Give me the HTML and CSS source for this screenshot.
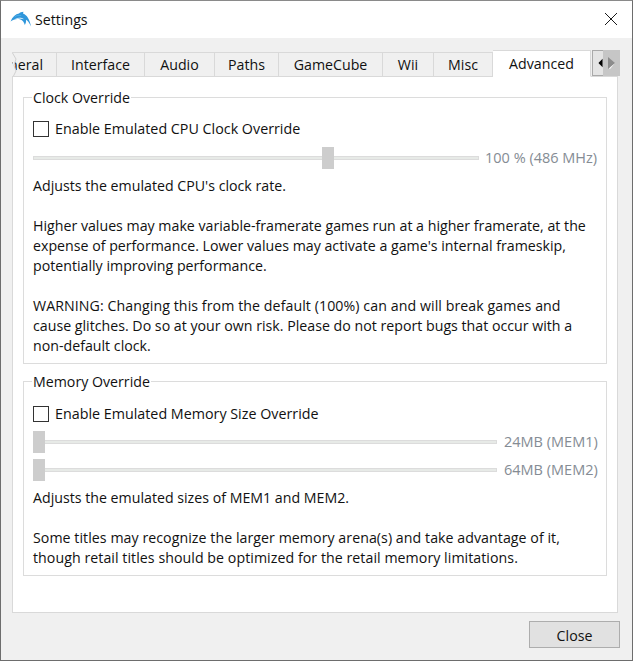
FILE: index.html
```html
<!DOCTYPE html>
<html lang="en">
<head>
<meta charset="utf-8">
<title>Settings</title>
<link rel="stylesheet" href="styles.css">
</head>
<body>
<div class="window">
  <header class="titlebar">
    <svg class="logo" width="22" height="17" viewBox="0 0 22 17">
      <path d="M0.500 10.500C2.500 6 5.500 3.200 9 2.600C10 1.400 11.500 0.800 13.500 0.700C13 1.500 13 2.200 13.300 2.800C16.800 4 19.500 8 21 15.500C19 11.500 17.500 9.500 16 8.800C16.300 10.500 15.800 12.500 14.800 14C14.300 11.500 12.500 9.300 10.500 8.500C7 7.400 3.500 8.200 0.500 10.500Z" fill="#2f96db"/>
      <path d="M2.500 7.500C5 5 8.500 3.800 11.500 4.200C8 4.200 5 5.300 2.500 7.500Z" fill="#7fd0f2"/>
      <path d="M5 8C8 6.300 11.500 6.300 14 8.200C11.500 7.200 8 7.200 5 8Z" fill="#ffffff"/>
    </svg>
    <span class="title">Settings</span>
    <svg class="close-x" width="14" height="14" viewBox="0 0 14 14"><path d="M1 1L13 13M13 1L1 13" stroke="#1a1a1a" stroke-width="1" fill="none"/></svg>
  </header>
  <main class="content">
    <div class="tabstrip">
      <div class="tabs">
        <div class="tab clipped">
          <span>General</span>
          <svg class="tab-cut" width="5" height="25" viewBox="0 0 5 25"><path d="M0.500 0L4 6L2 12.500L4 18L0.500 25" stroke="#d0d0d0" stroke-width="1" fill="#f0f0f0"/></svg>
        </div>
        <div class="tab"><span>Interface</span></div>
        <div class="tab"><span>Audio</span></div>
        <div class="tab"><span>Paths</span></div>
        <div class="tab"><span>GameCube</span></div>
        <div class="tab"><span>Wii</span></div>
        <div class="tab"><span>Misc</span></div>
        <div class="tab active"><span>Advanced</span></div>
      </div>
      <div class="scroller">
        <div class="scroll-btn left"><svg width="6" height="10" viewBox="0 0 6 10"><path d="M5.500 0L0.500 5L5.500 10Z" fill="#000"/></svg></div>
        <div class="scroll-btn right"><svg width="7" height="12" viewBox="0 0 7 12"><path d="M0 0L7 6L0 12Z" fill="#8c8c8c"/><path d="M1 11.500L7 6L2 12Z" fill="#fff"/></svg></div>
      </div>
    </div>
    <section class="pane">
      <fieldset class="group group-clock">
        <legend>Clock Override</legend>
        <label class="check"><span class="box"></span>Enable Emulated CPU Clock Override</label>
        <div class="slider-row clock-row">
          <div class="slider clock-slider"><span class="thumb clock-thumb"></span></div>
          <span class="value">100 % (486 MHz)</span>
        </div>
        <p class="note">Adjusts the emulated CPU's clock rate.</p>
        <p class="note">Higher values may make variable-framerate games run at a higher framerate, at the<br>expense of performance. Lower values may activate a game's internal frameskip,<br>potentially improving performance.</p>
        <p class="note"><span class="wide">WARNING: Changing this from the default (100%) can and will break games and</span><br>cause glitches. Do so at your own risk. Please do not report bugs that occur with a<br>non-default clock.</p>
      </fieldset>
      <fieldset class="group group-memory">
        <legend>Memory Override</legend>
        <label class="check"><span class="box"></span>Enable Emulated Memory Size Override</label>
        <div class="slider-row mem-row">
          <div class="slider"><span class="thumb"></span></div>
          <span class="value">24MB (MEM1)</span>
        </div>
        <div class="slider-row mem-row">
          <div class="slider"><span class="thumb"></span></div>
          <span class="value">64MB (MEM2)</span>
        </div>
        <p class="note mem-note">Adjusts the emulated sizes of MEM1 and MEM2.</p>
        <p class="note mem-detail">Some titles may recognize the larger memory arena(s) and take advantage of it,<br>though retail titles should be optimized for the retail memory limitations.</p>
      </fieldset>
    </section>
    <footer class="actions">
      <button class="close-btn" type="button">Close</button>
    </footer>
  </main>
</div>
</body>
</html>
```
FILE: styles.css
```css
* { box-sizing: border-box; }
html, body { margin: 0; padding: 0; }
body {
  width: 633px;
  height: 661px;
  overflow: hidden;
  font-family: "Open Sans", "Noto Sans", sans-serif;
  font-size: 14.2px;
  line-height: 20px;
  color: #000;
}
.window {
  width: 633px;
  height: 661px;
  display: flex;
  flex-direction: column;
  border: 1px solid #6d6d6d;
  border-top-color: #8a8a8a;
  background: #f0f0f0;
}
.titlebar {
  height: 37px;
  flex: none;
  background: #fff;
  display: flex;
  align-items: center;
  padding: 0 14px 0 9px;
}
.logo { margin-right: 3px; margin-top: -1px; }
.title { flex: 1; color: #111; }
.close-x { margin-top: -2px; }
.content {
  flex: 1;
  display: flex;
  flex-direction: column;
  padding: 12px 13px 0 11px;
}
.tabstrip {
  height: 27px;
  display: flex;
  align-items: flex-end;
  position: relative;
  z-index: 1;
  margin-bottom: -1px;
}
.tabs {
  display: grid;
  grid-template-columns: 45px 88px 70px 64px 104px 51px 59px 98px;
  width: 579px;
  height: 27px;
  align-items: end;
}
.tab {
  height: 25px;
  border: 1px solid #d9d9d9;
  border-left: 0;
  background: #f0f0f0;
  display: flex;
  justify-content: center;
  align-items: center;
  overflow: hidden;
  white-space: nowrap;
  color: #111;
}
.tab.clipped { justify-content: flex-end; padding-right: 13px; position: relative; }
.tab-cut { position: absolute; left: 0; top: 0; }
.tab.active {
  height: 27px;
  background: #fff;
  border-bottom-color: #fff;
  border-top-color: #d9d9d9;
}
.scroller {
  display: flex;
  width: 28px;
  height: 26px;
  margin-left: 1px;
  margin-bottom: 1px;
}
.scroll-btn {
  display: flex;
  align-items: center;
  justify-content: center;
}
.scroll-btn.left {
  width: 11px;
  padding-left: 5px;
  background: #e4e4e4;
  border: 1px solid #a9a9a9;
  border-right: 0;
}
.scroll-btn.right { width: 17px; background: #c6c6c6; }
.pane {
  width: 606px;
  height: 537px;
  flex: none;
  background: #fff;
  border: 1px solid #d9d9d9;
  padding: 9px 10px 0;
}
.group {
  margin: 0;
  padding: 0 8px 0 9px;
  border: 1px solid #dcdcdc;
  min-width: 0;
  display: block;
}
.group legend {
  padding: 2px 1px 0;
  margin-left: -1px;
  color: #111;
  line-height: 20px;
}
.group-clock { height: 278px; }
.group-memory { height: 206px; margin-top: 6px; }
.check {
  display: flex;
  align-items: center;
  height: 20px;
  margin-top: 11px;
  color: #111;
  font-size: 14.3px;
}
.group-memory .check { margin-top: 12px; }
.box {
  width: 16px;
  height: 16px;
  border: 1px solid #333;
  background: #fff;
  margin-right: 6px;
}
.slider-row {
  display: flex;
  align-items: center;
  color: #858c94;
}
.value { flex: none; white-space: nowrap; font-size: 14.5px; }
.clock-row { height: 22px; margin-top: 8px; gap: 6px; }
.clock-row .value { width: 113px; }
.mem-row { height: 22px; margin-top: 6px; gap: 7px; }
.mem-row .value { width: 94px; }
.check + .mem-row { margin-top: 7px; }
.slider {
  flex: 1;
  height: 4px;
  background: #e7eae7;
  border: 1px solid #dcdcdc;
  position: relative;
}
.thumb {
  position: absolute;
  left: -1px;
  top: -10px;
  width: 12px;
  height: 22px;
  background: #cdcdcd;
}
.thumb.clock-thumb { left: 288px; }
.note { margin: 0 0 20px; color: #111; }
.wide { letter-spacing: 0.07px; }
.mem-detail { letter-spacing: 0.05px; }
.clock-row + .note { margin-top: 7px; }
.mem-note { margin-top: 7px; }
.actions {
  display: flex;
  justify-content: flex-end;
  padding-top: 8px;
}
.close-btn {
  width: 91px;
  height: 27px;
  margin-right: -1px;
  font: inherit;
  color: #111;
  background: #e1e1e1;
  border: 1px solid #adadad;
  padding: 2px 0 0;
}
```
